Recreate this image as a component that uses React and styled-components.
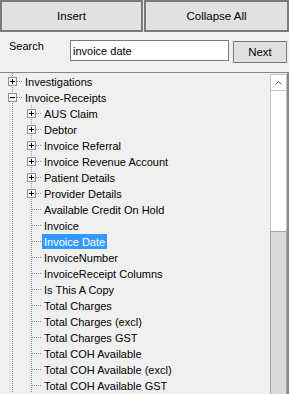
import React from 'react';
import styled, { createGlobalStyle } from 'styled-components';

const GlobalStyle = createGlobalStyle`
  html, body {
    margin: 0;
    padding: 0;
    background: #f0f0f0;
    overflow: hidden;
  }
  body {
    font-family: "Liberation Sans", Arial, sans-serif;
    font-size: 11px;
    color: #000;
  }
`;

const Window = styled.div`
  width: 289px;
  height: 394px;
  display: flex;
  flex-direction: column;
  background: #f0f0f0;
`;

const ButtonBar = styled.div`
  display: grid;
  grid-template-columns: 143px 145px;
  gap: 1px;
  height: 32px;
`;

const BigButton = styled.button`
  font-family: inherit;
  font-size: 11.5px;
  color: #000;
  background: #e1e1e1;
  border: 2px solid #7a7a7a;
  margin: 0;
  padding: 0;
`;

const SearchRow = styled.div`
  display: flex;
  align-items: flex-start;
  height: 40px;
  padding: 8px 0 0 9px;
  box-sizing: border-box;
`;

const SearchLabel = styled.span`
  width: 61px;
  line-height: 13px;
`;

const SearchInput = styled.input`
  width: 159px;
  height: 21px;
  box-sizing: border-box;
  border: 1px solid #7a7a7a;
  background: #fff;
  font-family: inherit;
  font-size: 11px;
  padding: 0 2px;
  margin: 0;
  outline: none;
`;

const NextButton = styled.button`
  width: 54px;
  height: 22px;
  margin: 1px 0 0 4px;
  padding: 0;
  font-family: inherit;
  font-size: 11.5px;
  color: #000;
  background: #e1e1e1;
  border: 1px solid #7a7a7a;
`;

const TreePanel = styled.div`
  flex: 1;
  display: flex;
  border-top: 1px solid #828790;
  border-right: 2px solid #8a8a8a;
  overflow: hidden;
`;

const TreeBody = styled.div`
  flex: 1;
  padding-left: 3px;
`;

const Row = styled.div`
  display: flex;
  align-items: flex-start;
  height: 16px;
  white-space: nowrap;
`;

const dots = '#8c8c8c';

const Guide = styled.span`
  flex: none;
  width: 19px;
  height: 16px;
  background-image: repeating-linear-gradient(to bottom, ${dots} 0 1px, transparent 1px 2px);
  background-size: 1px 100%;
  background-position: 9px 0;
  background-repeat: no-repeat;
`;

const Connector = styled.span`
  flex: none;
  width: 19px;
  height: 16px;
  display: flex;
  justify-content: center;
  align-items: flex-start;
  background-image:
    repeating-linear-gradient(to bottom, ${dots} 0 1px, transparent 1px 2px),
    repeating-linear-gradient(to right, ${dots} 0 1px, transparent 1px 2px);
  background-size: 1px 100%, 10px 1px;
  background-position: 9px 0, 10px 8px;
  background-repeat: no-repeat;
`;

const ExpanderBox = styled.svg`
  display: block;
  margin-top: 4px;
  margin-right: 1px;
`;

const Label = styled.span`
  margin: 1px 0 0 1px;
  height: 15px;
  line-height: 16px;
  padding: 0 2px;
  background: ${(p) => (p.$selected ? '#3399ff' : 'transparent')};
  color: ${(p) => (p.$selected ? '#fff' : '#000')};
`;

const ScrollBar = styled.div`
  flex: none;
  width: 17px;
  margin-top: 1px;
  display: flex;
  flex-direction: column;
`;

const UpButton = styled.div`
  height: 17px;
  box-sizing: border-box;
  border: 1px solid #c4c4c4;
  background: #fff;
  display: flex;
  align-items: center;
  justify-content: center;
`;

const Track = styled.div`
  height: 140px;
  background: #fff;
  border-left: 1px solid #c4c4c4;
  border-right: 1px solid #c4c4c4;
`;

const Thumb = styled.div`
  flex: 1;
  background: #dadada;
  border: 1px solid #a6a6a6;
  border-bottom: none;
`;

const Expander = ({ open }) => (
  <ExpanderBox width="9" height="9" viewBox="0 0 9 9">
    <rect x="0.5" y="0.5" width="8" height="8" fill="#f7f7f7" stroke="#919191" />
    <path d="M2 4.5h5" stroke="#000" />
    {!open && <path d="M4.5 2v5" stroke="#000" />}
  </ExpanderBox>
);

const nodes = [
  { label: 'Investigations', level: 0, kids: true },
  { label: 'Invoice-Receipts', level: 0, kids: true, open: true },
  { label: 'AUS Claim', level: 1, kids: true },
  { label: 'Debtor', level: 1, kids: true },
  { label: 'Invoice Referral', level: 1, kids: true },
  { label: 'Invoice Revenue Account', level: 1, kids: true },
  { label: 'Patient Details', level: 1, kids: true },
  { label: 'Provider Details', level: 1, kids: true },
  { label: 'Available Credit On Hold', level: 1 },
  { label: 'Invoice', level: 1 },
  { label: 'Invoice Date', level: 1, selected: true },
  { label: 'InvoiceNumber', level: 1 },
  { label: 'InvoiceReceipt Columns', level: 1 },
  { label: 'Is This A Copy', level: 1 },
  { label: 'Total Charges', level: 1 },
  { label: 'Total Charges (excl)', level: 1 },
  { label: 'Total Charges GST', level: 1 },
  { label: 'Total COH Available', level: 1 },
  { label: 'Total COH Available (excl)', level: 1 },
  { label: 'Total COH Available GST', level: 1 },
];

export default function App() {
  return (
    <>
      <GlobalStyle />
      <Window>
        <ButtonBar>
          <BigButton>Insert</BigButton>
          <BigButton>Collapse All</BigButton>
        </ButtonBar>
        <SearchRow>
          <SearchLabel>Search</SearchLabel>
          <SearchInput defaultValue="invoice date" />
          <NextButton>Next</NextButton>
        </SearchRow>
        <TreePanel>
          <TreeBody>
            {nodes.map((n) => (
              <Row key={n.label}>
                {n.level > 0 && <Guide />}
                <Connector>{n.kids && <Expander open={n.open} />}</Connector>
                <Label $selected={n.selected}>{n.label}</Label>
              </Row>
            ))}
          </TreeBody>
          <ScrollBar>
            <UpButton>
              <svg width="7" height="5" viewBox="0 0 7 5">
                <path d="M0.5 4.5L3.5 1.5L6.5 4.5" fill="none" stroke="#606060" />
              </svg>
            </UpButton>
            <Track />
            <Thumb />
          </ScrollBar>
        </TreePanel>
      </Window>
    </>
  );
}
